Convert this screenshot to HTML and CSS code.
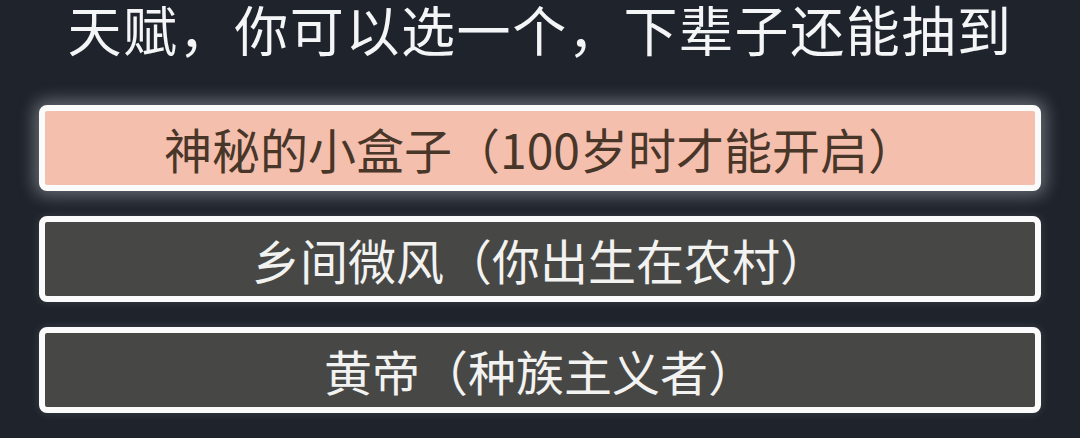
FILE: index.html
```html
<!DOCTYPE html>
<html lang="zh-CN">
<head>
    <meta charset="utf-8">
    <title>天赋选择</title>
    <link rel="stylesheet" href="styles.css">
</head>
<body>

<h1 class="title">天赋，你可以选一个，下辈子还能抽到</h1>

<div class="talent-list">
    <div class="talent selected">神秘的小盒子（100岁时才能开启）</div>
    <div class="talent">乡间微风（你出生在农村）</div>
    <div class="talent">黄帝（种族主义者）</div>
</div>

</body>
</html>
```

FILE: styles.css
```css
body {
    font-family: "Noto Sans CJK SC", "Noto Sans", sans-serif;
    margin: 0;
    padding: 0;
    background-color: #1f242c;
    height: 438px;
    overflow: hidden;
}

.title {
    margin: 0;
    height: 105px;
    line-height: 57px;
    font-size: 54px;
    font-weight: normal;
    letter-spacing: 1.6px;
    text-align: center;
    color: #f4f5f7;
}

.talent-list {
    display: flex;
    flex-direction: column;
    gap: 25px;
    padding: 0 39px;
}

.talent {
    height: 74px;
    border: 6px solid #fbfbfb;
    border-radius: 8px;
    background-color: #474745;
    color: #f2f2f0;
    font-size: 48px;
    line-height: 74px;
    text-align: center;
    box-shadow: 0 0 10px rgba(255, 255, 255, 0.12);
}

.talent.selected {
    background-color: #f5bfae;
    color: #483629;
    box-shadow: 0 0 16px 5px rgba(230, 232, 238, 0.35);
}
```
